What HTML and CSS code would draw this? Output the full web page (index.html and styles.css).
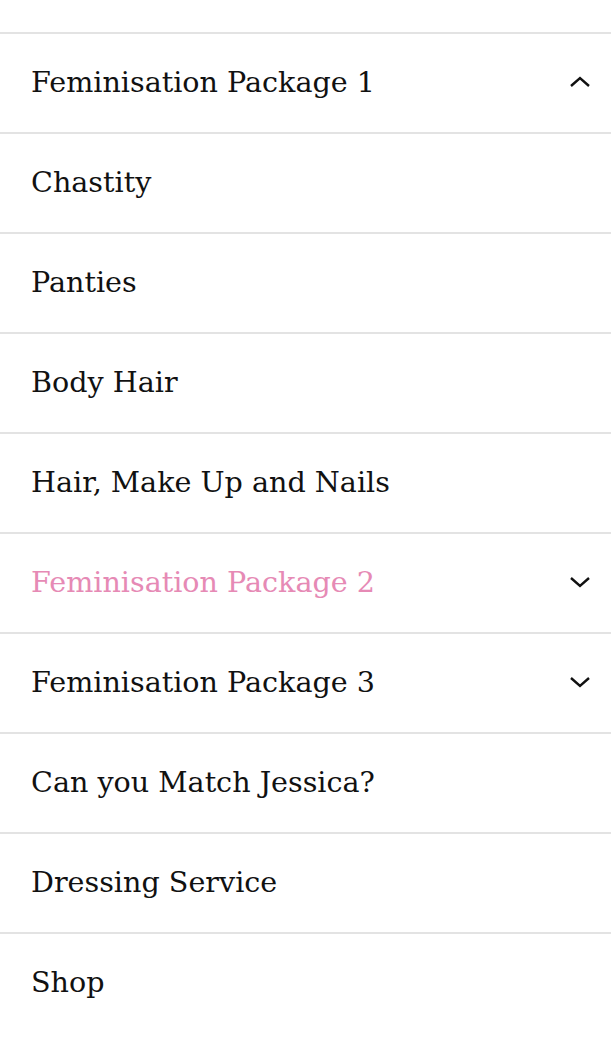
FILE: index.html
```html
<!DOCTYPE html>
<html lang="en">

<head>
    <meta charset="UTF-8">
    <meta name="viewport" content="width=device-width, initial-scale=1.0">
    <title>Menu</title>
    <link rel="stylesheet" href="styles.css">
</head>

<body>
    <nav class="mobileMenu">
        <ul>
            <li class="menuItem">
                <a href="#">Feminisation Package 1</a>
                <svg class="chevron" viewBox="0 0 22 12"><path d="M2 10 L11 2 L20 10" /></svg>
            </li>
            <li class="menuItem"><a href="#">Chastity</a></li>
            <li class="menuItem"><a href="#">Panties</a></li>
            <li class="menuItem"><a href="#">Body Hair</a></li>
            <li class="menuItem"><a href="#">Hair, Make Up and Nails</a></li>
            <li class="menuItem active">
                <a href="#">Feminisation Package 2</a>
                <svg class="chevron" viewBox="0 0 22 12"><path d="M2 2 L11 10 L20 2" /></svg>
            </li>
            <li class="menuItem">
                <a href="#">Feminisation Package 3</a>
                <svg class="chevron" viewBox="0 0 22 12"><path d="M2 2 L11 10 L20 2" /></svg>
            </li>
            <li class="menuItem"><a href="#">Can you Match Jessica?</a></li>
            <li class="menuItem"><a href="#">Dressing Service</a></li>
            <li class="menuItem"><a href="#">Shop</a></li>
        </ul>
    </nav>
</body>

</html>
```

FILE: styles.css
```css
* {
    box-sizing: border-box;
    margin: 0;
    padding: 0;
}

body {
    background-color: #fff;
    font-family: "DejaVu Serif", "Liberation Serif", serif;
}

.mobileMenu {
    padding-top: 32px;
}

.mobileMenu ul {
    list-style: none;
}

.menuItem {
    height: 100px;
    border-top: 2px solid #e3e3e3;
    padding: 0 20px 2px 31px;
    display: flex;
    align-items: center;
    justify-content: space-between;
}

.menuItem a {
    color: #111;
    text-decoration: none;
    font-size: 28.6px;
}

.menuItem.active a {
    color: #e68ab5;
}

.chevron {
    width: 22px;
    height: 12px;
    fill: none;
    stroke: #111;
    stroke-width: 2.4;
}
```
